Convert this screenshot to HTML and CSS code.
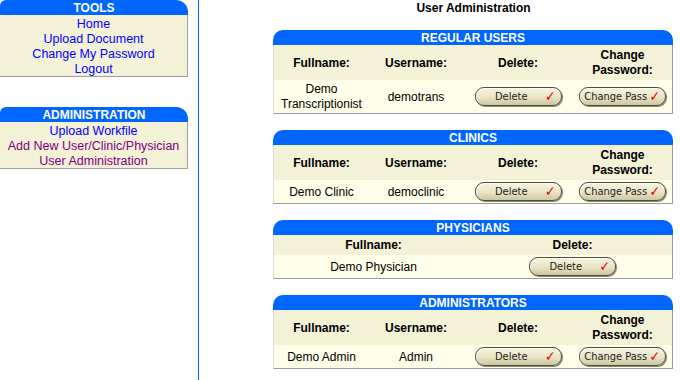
FILE: index.html
```html
<!DOCTYPE html>
<html>
<head lang="en">
    <meta charset="UTF-8">
    <title>User Administration</title>
    <link rel="stylesheet" href="styles.css">
</head>
<body>
<div class="page">
    <div class="sidebar">
        <div class="navbox">
            <div class="navbox-head">TOOLS</div>
            <ul class="navbox-links">
                <li><a href="#">Home</a></li>
                <li><a href="#">Upload Document</a></li>
                <li><a href="#">Change My Password</a></li>
                <li><a href="#">Logout</a></li>
            </ul>
        </div>
        <div class="navbox">
            <div class="navbox-head">ADMINISTRATION</div>
            <ul class="navbox-links">
                <li><a href="#">Upload Workfile</a></li>
                <li><a href="#" class="visited">Add New User/Clinic/Physician</a></li>
                <li><a href="#" class="visited">User Administration</a></li>
            </ul>
        </div>
    </div>

    <div class="main">
        <h1 class="title">User Administration</h1>

        <div class="panel">
            <div class="panel-head">REGULAR USERS</div>
            <div class="panel-body">
                <table class="grid four">
                    <colgroup><col class="c1"><col class="c2"><col class="c3"><col class="c4"></colgroup>
                    <tr class="cols">
                        <th>Fullname:</th><th>Username:</th><th>Delete:</th><th>Change<br>Password:</th>
                    </tr>
                    <tr class="row">
                        <td>Demo<br>Transcriptionist</td><td>demotrans</td>
                        <td><span class="btn"><span class="btn-label">Delete</span><span class="tick">&#10003;</span></span></td>
                        <td><span class="btn"><span class="btn-label">Change Pass</span><span class="tick">&#10003;</span></span></td>
                    </tr>
                </table>
            </div>
        </div>

        <div class="panel">
            <div class="panel-head">CLINICS</div>
            <div class="panel-body">
                <table class="grid four">
                    <colgroup><col class="c1"><col class="c2"><col class="c3"><col class="c4"></colgroup>
                    <tr class="cols">
                        <th>Fullname:</th><th>Username:</th><th>Delete:</th><th>Change<br>Password:</th>
                    </tr>
                    <tr class="row">
                        <td>Demo Clinic</td><td>democlinic</td>
                        <td><span class="btn"><span class="btn-label">Delete</span><span class="tick">&#10003;</span></span></td>
                        <td><span class="btn"><span class="btn-label">Change Pass</span><span class="tick">&#10003;</span></span></td>
                    </tr>
                </table>
            </div>
        </div>

        <div class="panel">
            <div class="panel-head">PHYSICIANS</div>
            <div class="panel-body">
                <table class="grid two">
                    <tr class="cols">
                        <th>Fullname:</th><th>Delete:</th>
                    </tr>
                    <tr class="row">
                        <td>Demo Physician</td>
                        <td><span class="btn"><span class="btn-label">Delete</span><span class="tick">&#10003;</span></span></td>
                    </tr>
                </table>
            </div>
        </div>

        <div class="panel">
            <div class="panel-head">ADMINISTRATORS</div>
            <div class="panel-body">
                <table class="grid four">
                    <colgroup><col class="c1"><col class="c2"><col class="c3"><col class="c4"></colgroup>
                    <tr class="cols">
                        <th>Fullname:</th><th>Username:</th><th>Delete:</th><th>Change<br>Password:</th>
                    </tr>
                    <tr class="row">
                        <td>Demo Admin</td><td>Admin</td>
                        <td><span class="btn"><span class="btn-label">Delete</span><span class="tick">&#10003;</span></span></td>
                        <td><span class="btn"><span class="btn-label">Change Pass</span><span class="tick">&#10003;</span></span></td>
                    </tr>
                </table>
            </div>
        </div>
    </div>
</div>
</body>
</html>
```
FILE: styles.css
```css
*{
    margin: 0;
    padding: 0;
    box-sizing: border-box;
}
body{
    font-family: "Liberation Sans", Arial, sans-serif;
    font-size: 12px;
    line-height: 15px;
    color: #000;
    background: #fff;
}
li{
    list-style: none;
}
.page{
    display: flex;
    min-height: 100vh;
}

/* left menu */
.sidebar{
    width: 199px;
    border-right: 1px solid #0066ff;
    display: flex;
    flex-direction: column;
    gap: 30px;
}
.navbox{
    width: 188px;
}
.navbox-head{
    height: 15px;
    padding-top: 1px;
    background: #0066ff;
    color: #fff;
    font-weight: bold;
    text-align: center;
    border-radius: 6px 12px 0 0;
}
.navbox-links{
    background: #f3f1d6;
    border-right: 1px solid #a0a0a0;
    border-bottom: 1px solid #a0a0a0;
    padding-top: 2px;
    height: 62px;
    font-size: 12.5px;
    text-align: center;
}
.navbox + .navbox .navbox-links{
    height: 47px;
}
.navbox-links a{
    color: #0000ff;
    text-decoration: none;
}
.navbox-links a.visited{
    color: #800080;
}

/* main area */
.main{
    padding-left: 74px;
    width: 475px;
}
.title{
    font-size: 12px;
    font-weight: bold;
    text-align: center;
    line-height: 15px;
    padding-top: 1px;
    margin-bottom: 14px;
}
.panel{
    width: 400px;
    margin-bottom: 16px;
}
.panel-head{
    height: 15px;
    padding-top: 1px;
    background: #0066ff;
    color: #fff;
    font-weight: bold;
    text-align: center;
    border-radius: 10px 10px 0 0;
}
.panel-body{
    border-left: 1px solid #dedede;
    border-right: 1px solid #9a9a9a;
    border-bottom: 1px solid #9a9a9a;
}
.grid{
    width: 100%;
    border-collapse: collapse;
    table-layout: fixed;
}
.grid .c1{ width: 95px; }
.grid .c2{ width: 94px; }
.grid .c3{ width: 110px; }
.grid .c4{ width: 99px; }
.grid th{
    background: #f3f1d6;
    padding: 3px 2px 2px;
    font-weight: bold;
    vertical-align: middle;
}
.grid td{
    background: #fffee9;
    padding: 2px 2px 1px;
    text-align: center;
    vertical-align: middle;
}

/* beveled pill button */
.btn{
    display: inline-flex;
    align-items: center;
    vertical-align: middle;
    width: 87px;
    height: 19px;
    margin-bottom: 1px;
    border: 1px solid #4f4c40;
    border-radius: 9px;
    background: linear-gradient(#f6f4e0, #e8e4c4 55%, #cdc7a0);
    box-shadow: inset 1px 1px 0 #fffdf0, 1px 1px 0 #8c8874;
    font-family: "DejaVu Sans Condensed", "DejaVu Sans", sans-serif;
    font-stretch: condensed;
    font-size: 11px;
    line-height: 15px;
    color: #222;
    cursor: pointer;
}
.btn-label{
    flex: 1;
    text-align: center;
    padding-left: 2px;
}
.tick{
    color: #e60000;
    font-family: "DejaVu Sans", sans-serif;
    font-size: 14px;
    padding-right: 5px;
}
```
